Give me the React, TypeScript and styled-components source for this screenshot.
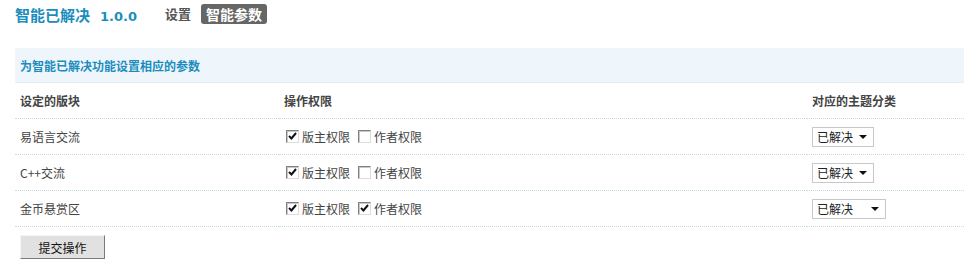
import React, { FC } from 'react';
import styled, { createGlobalStyle } from 'styled-components';

const GlobalStyle = createGlobalStyle`
    body {
        margin: 0;
        background: #fff;
        font-family: Tahoma, "Noto Sans CJK SC", "Liberation Sans", sans-serif;
        font-size: 12px;
        color: #333;
    }
`;

type Forum = {
    name: string;
    moderator: boolean;
    author: boolean;
    wide?: boolean;
};

const forums: Forum[] = [
    { name: '易语言交流', moderator: true, author: false },
    { name: 'C++交流', moderator: true, author: false },
    { name: '金币悬赏区', moderator: true, author: true, wide: true },
];

const Check: FC<{ checked: boolean }> = ({ checked }) => (
    <Box>
        {checked && (
            <svg width="9" height="9" viewBox="0 0 9 9">
                <path d="M1 4 L3.5 6.5 L8 1" fill="none" stroke="#111" strokeWidth="2" />
            </svg>
        )}
    </Box>
);

const App: FC = () => {
    return (
        <Page>
            <GlobalStyle />
            <TopBar>
                <Title>
                    智能已解决<Version>1.0.0</Version>
                </Title>
                <Nav>
                    <NavItem>设置</NavItem>
                    <NavItem $active>智能参数</NavItem>
                </Nav>
            </TopBar>

            <Table>
                <colgroup>
                    <col style={{ width: 264 }} />
                    <col style={{ width: 528 }} />
                    <col />
                </colgroup>
                <thead>
                    <tr>
                        <Caption colSpan={3}>为智能已解决功能设置相应的参数</Caption>
                    </tr>
                    <HeadRow>
                        <Th>设定的版块</Th>
                        <Th>操作权限</Th>
                        <Th>对应的主题分类</Th>
                    </HeadRow>
                </thead>
                <tbody>
                    {forums.map((f) => (
                        <Row key={f.name}>
                            <Td>{f.name}</Td>
                            <Td>
                                <Perms>
                                    <Perm>
                                        <Check checked={f.moderator} />
                                        版主权限
                                    </Perm>
                                    <Perm>
                                        <Check checked={f.author} />
                                        作者权限
                                    </Perm>
                                </Perms>
                            </Td>
                            <Td>
                                <Select $wide={f.wide}>
                                    <span>已解决</span>
                                    <Arrow />
                                </Select>
                            </Td>
                        </Row>
                    ))}
                </tbody>
            </Table>

            <Submit>提交操作</Submit>
        </Page>
    );
};

const Page = styled.div`
    padding: 4px 0 0 15px;
`;

const TopBar = styled.div`
    display: flex;
    align-items: center;
    height: 20px;
    margin-bottom: 24px;
`;

const Title = styled.h1`
    margin: 0;
    font-size: 15px;
    font-weight: bold;
    color: #1b8dbd;
`;

const Version = styled.span`
    font-family: Verdana, "DejaVu Sans", sans-serif;
    font-size: 13px;
    margin-left: 10px;
`;

const Nav = styled.div`
    display: flex;
    align-items: center;
    gap: 6px;
    margin-left: 28px;
`;

const NavItem = styled.span<{ $active?: boolean }>`
    font-weight: bold;
    font-size: ${(p) => (p.$active ? '14px' : '13px')};
    line-height: 20px;
    padding: 0 ${(p) => (p.$active ? '5px' : '0')};
    border-radius: 3px;
    color: ${(p) => (p.$active ? '#fff' : '#555')};
    background: ${(p) => (p.$active ? '#666' : 'transparent')};
    margin-left: ${(p) => (p.$active ? '4px' : '0')};
`;

const Table = styled.table`
    width: 949px;
    border-collapse: collapse;
    table-layout: fixed;
`;

const Caption = styled.th`
    height: 34px;
    padding: 0 5px;
    text-align: left;
    font-size: 12px;
    font-weight: bold;
    color: #1b8dbd;
    background: #eef5fb;
    border-bottom: 1px solid #e3edf4;
`;

const HeadRow = styled.tr`
    border-bottom: 1px dotted #c4dbe4;
`;

const Th = styled.th`
    height: 35px;
    padding: 0 5px;
    text-align: left;
    font-size: 12px;
    font-weight: bold;
    color: #444;
`;

const Row = styled.tr`
    border-bottom: 1px dotted #c4dbe4;
`;

const Td = styled.td`
    height: 35px;
    padding: 0 5px;
    font-size: 12px;
    color: #444;
`;

const Perms = styled.div`
    display: flex;
    gap: 8px;
    padding-left: 2px;
`;

const Perm = styled.label`
    display: flex;
    align-items: center;
    gap: 3px;
`;

const Box = styled.span`
    box-sizing: border-box;
    display: inline-flex;
    align-items: center;
    justify-content: center;
    width: 13px;
    height: 13px;
    background: #fff;
    border: 1px solid;
    border-color: #808080 #dcdcdc #dcdcdc #808080;
    box-shadow: inset 1px 1px 0 #c8c8c8;
`;

const Select = styled.div<{ $wide?: boolean }>`
    box-sizing: border-box;
    display: inline-flex;
    align-items: center;
    justify-content: space-between;
    width: ${(p) => (p.$wide ? '74px' : '62px')};
    height: 20px;
    padding: 0 6px 0 4px;
    border: 1px solid #c8c8c8;
    background: #fff;
    font-size: 12px;
    color: #222;
`;

const Arrow = styled.span`
    width: 0;
    height: 0;
    border-left: 4px solid transparent;
    border-right: 4px solid transparent;
    border-top: 4px solid #111;
`;

const Submit = styled.button`
    box-sizing: border-box;
    margin: 8px 0 0 5px;
    width: 85px;
    height: 24px;
    font-family: "Noto Sans CJK SC", sans-serif;
    font-size: 12px;
    color: #111;
    background: #e1e1e1;
    border: 1px solid;
    border-color: #f4f4f4 #7a7a7a #7a7a7a #f4f4f4;
    padding: 0;
`;

export default App;
